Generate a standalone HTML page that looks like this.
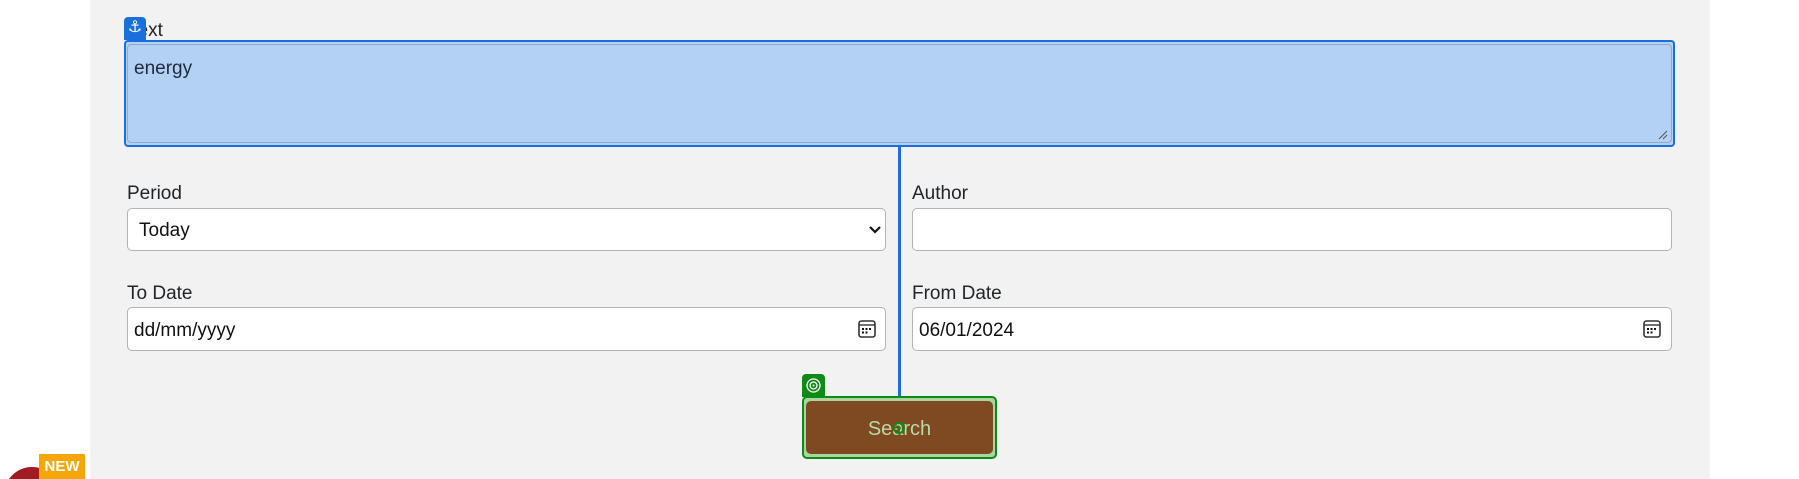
<!DOCTYPE html>
<html><head><style>
*{box-sizing:border-box;margin:0;padding:0}
html,body{width:1799px;height:479px;overflow:hidden;background:#fff}
#w{width:1799px;height:479px;position:relative;overflow:hidden;font-family:"Liberation Sans","DejaVu Sans",sans-serif;color:#212529}
.a{position:absolute}
.panel{left:90px;top:0;width:1620px;height:479px;background:#f2f2f2}
.lbl{font-size:19px;color:#212529}
.inp{background:#fff;border:1px solid #b3b3b3;border-radius:5px}
</style></head><body><div id="w">
<div class="a panel"></div>
<div class="a lbl" style="left:128px;top:20px">Text</div>
<div class="a" style="left:124px;top:17px;width:22px;height:23px;background:#1a6fdc;border-radius:4px 4px 0 0;color:#fff;font-size:16px;text-align:center;line-height:22px">⚓</div>
<div class="a" style="left:124px;top:40px;width:1551px;height:107px;border:2px solid #1a6fdc;border-radius:4px;background:#b3d1f4"></div>
<div class="a" style="left:127px;top:44px;width:1545px;height:99px;border:1px solid #8fa9c9;border-radius:4px"></div>
<div class="a" style="left:134px;top:58px;font-size:19px;color:#1f2a3a">energy</div>
<svg class="a" style="left:1658px;top:130px" width="10" height="10"><path d="M1 9L9 1M5 9L9 5" stroke="#555" stroke-width="1"/></svg>
<div class="a" style="left:898px;top:147px;width:3px;height:250px;background:#1a6fdc"></div>

<div class="a lbl" style="left:127px;top:183px">Period</div>
<div class="a inp" style="left:127px;top:208px;width:759px;height:43px"></div>
<div class="a" style="left:139px;top:220px;font-size:19px;color:#111">Today</div>
<svg class="a" style="left:869px;top:225px" width="12" height="10"><path d="M1 2L6 7L11 2" stroke="#111" stroke-width="2.2" fill="none"/></svg>
<div class="a lbl" style="left:912px;top:183px">Author</div>
<div class="a inp" style="left:912px;top:208px;width:760px;height:43px"></div>

<div class="a lbl" style="left:127px;top:283px">To Date</div>
<div class="a inp" style="left:127px;top:307px;width:759px;height:44px"></div>
<div class="a" style="left:134px;top:320px;font-size:19px;color:#111">dd/mm/yyyy</div>
<div class="a lbl" style="left:912px;top:283px">From Date</div>
<div class="a inp" style="left:912px;top:307px;width:760px;height:44px"></div>
<div class="a" style="left:919px;top:320px;font-size:19px;color:#111">06/01/2024</div>
<svg class="a" style="left:858px;top:320px" width="18" height="18"><rect x="1" y="1" width="16" height="16" rx="2.5" fill="none" stroke="#333" stroke-width="1.6"/><line x1="1" y1="5" x2="17" y2="5" stroke="#333" stroke-width="1.4"/><g fill="#111"><rect x="4" y="8" width="2" height="2"/><rect x="7.5" y="8" width="2" height="2"/><rect x="11" y="8" width="2" height="2"/><rect x="4" y="11.5" width="2" height="2"/><rect x="7.5" y="11.5" width="2" height="2"/></g></svg>
<svg class="a" style="left:1643px;top:320px" width="18" height="18"><rect x="1" y="1" width="16" height="16" rx="2.5" fill="none" stroke="#333" stroke-width="1.6"/><line x1="1" y1="5" x2="17" y2="5" stroke="#333" stroke-width="1.4"/><g fill="#111"><rect x="4" y="8" width="2" height="2"/><rect x="7.5" y="8" width="2" height="2"/><rect x="11" y="8" width="2" height="2"/><rect x="4" y="11.5" width="2" height="2"/><rect x="7.5" y="11.5" width="2" height="2"/></g></svg>

<div class="a" style="left:802px;top:374px;width:23px;height:23px;background:#0e8a16;border-radius:4px 4px 0 0"></div>
<svg class="a" style="left:805px;top:377px" width="17" height="17"><circle cx="8.5" cy="8.5" r="6.5" fill="none" stroke="#fff" stroke-width="1.3"/><circle cx="8.5" cy="8.5" r="3.5" fill="none" stroke="#fff" stroke-width="1.3"/><circle cx="8.5" cy="8.5" r="1" fill="#fff"/></svg>
<div class="a" style="left:802px;top:396px;width:195px;height:63px;border:2px solid #0e8a16;border-radius:5px;background:#a8d5a0"></div>
<div class="a" style="left:806px;top:401px;width:187px;height:53px;background:#7f4a22;border-radius:5px;color:#b9d9a8;font-size:20px;text-align:center;line-height:56px">Search</div>
<svg class="a" style="left:892px;top:421px" width="14" height="14"><circle cx="7" cy="7" r="5" fill="none" stroke="#0e8a16" stroke-width="2"/><circle cx="7" cy="7" r="1.8" fill="#0e8a16"/></svg>

<svg class="a" style="left:0;top:459px" width="60" height="20"><circle cx="32" cy="36" r="28" fill="#a01c22"/></svg>
<div class="a" style="left:39px;top:454px;width:46px;height:25px;background:#f5a70a;color:#fff;font-weight:bold;font-size:15px;text-align:center;line-height:25px">NEW</div>
</div></body></html>
